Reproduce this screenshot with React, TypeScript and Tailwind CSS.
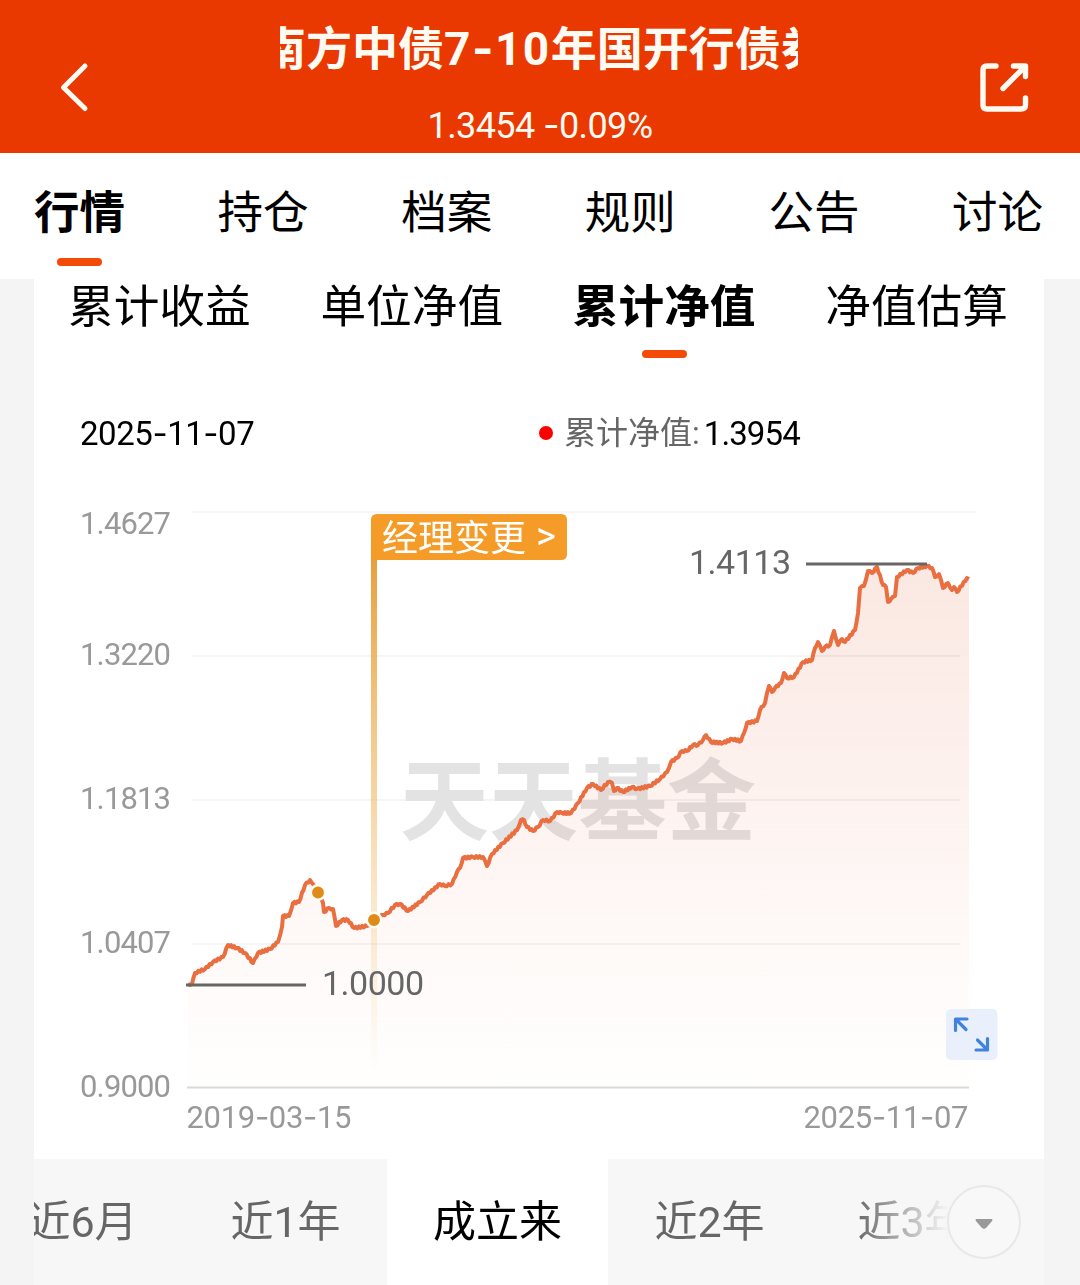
import React from 'react';
import clsx from 'clsx';

const mainTabs = ['行情', '持仓', '档案', '规则', '公告', '讨论'];
const chartTabs = ['累计收益', '单位净值', '累计净值', '净值估算'];
const ranges = ['近6月', '近1年', '成立来', '近2年', '近3年'];

const yLabels = [
  { value: '1.4627', y: 534 },
  { value: '1.3220', y: 665 },
  { value: '1.1813', y: 809 },
  { value: '1.0407', y: 953 },
  { value: '0.9000', y: 1097 },
];

const points: [number, number][] = [
  [188, 984], [192, 984], [195, 973], [205, 969], [213, 962], [223, 957], [228, 945], [237, 948], [245, 953], [253, 963],
  [258, 953], [270, 949], [278, 942], [282, 927], [283, 916], [289, 916], [293, 903], [299, 902], [305, 885], [310, 880],
  [312, 883], [318, 893], [323, 903], [324, 912], [329, 908], [333, 909], [336, 926], [342, 920], [348, 920], [354, 928],
  [367, 926], [374, 920], [383, 915], [388, 913], [395, 905], [400, 904], [408, 911], [420, 902], [427, 895], [440, 884],
  [445, 886], [452, 884], [457, 872], [460, 868], [463, 858], [473, 857], [483, 857], [487, 866], [492, 854], [503, 843],
  [517, 830], [521, 820], [524, 820], [527, 827], [533, 831], [538, 827], [543, 820], [550, 821], [557, 812], [562, 813],
  [571, 813], [578, 803], [587, 788], [593, 784], [601, 790], [608, 782], [612, 783], [614, 791], [617, 788], [623, 792],
  [632, 787], [637, 789], [650, 786], [660, 779], [667, 772], [671, 762], [677, 758], [682, 751], [687, 751], [693, 745],
  [698, 745], [703, 740], [706, 735], [711, 742], [723, 743], [732, 739], [741, 741], [744, 733], [747, 723], [757, 721],
  [760, 710], [765, 703], [767, 693], [769, 686], [772, 692], [775, 688], [781, 683], [784, 673], [787, 678], [794, 677],
  [803, 662], [812, 660], [815, 648], [818, 642], [822, 651], [825, 647], [830, 645], [834, 631], [838, 645], [842, 639],
  [845, 642], [855, 630], [858, 613], [860, 588], [864, 586], [868, 571], [872, 573], [877, 567], [883, 585], [886, 587],
  [888, 602], [891, 599], [895, 596], [897, 577], [907, 570], [913, 573], [918, 568], [927, 566], [932, 568], [935, 577],
  [939, 574], [943, 588], [948, 583], [952, 590], [954, 587], [957, 592], [967, 578], [969, 579],
];

// Small daily fluctuation between the sampled points
const buildLine = () => {
  const out: string[] = [];
  let n = 0;
  points.forEach(([x, y], i) => {
    out.push(`${x},${y}`);
    const next = points[i + 1];
    if (!next) return;
    const steps = Math.floor((next[0] - x) / 1.5);
    for (let s = 1; s < steps; s++) {
      const t = s / steps;
      n += 1;
      const offset = (n % 2 ? 1 : -1) * 0.9;
      out.push(`${(x + (next[0] - x) * t).toFixed(1)},${(y + (next[1] - y) * t + offset).toFixed(1)}`);
    }
  });
  return out.join(' L');
};

const line = buildLine();

// The dash is wider than the one of the digit font
const DateText: React.FC<{ value: string }> = ({ value }) => {
  const parts = value.split('-');
  return (
    <>
      {parts.map((part, i) => (
        <React.Fragment key={i}>
          {i > 0 && <span className="font-[Inter]">-</span>}
          {part}
        </React.Fragment>
      ))}
    </>
  );
};

const SvgDate: React.FC<{ value: string; x: number; y: number }> = ({ value, x, y }) => (
  <text x={x} y={y} textLength={165} className="fill-[#999999] text-[31px]">
    {value.split('-').map((part, i) => (
      <React.Fragment key={i}>
        {i > 0 && <tspan className="font-[Inter]">-</tspan>}
        {part}
      </React.Fragment>
    ))}
  </text>
);

const Header = () => (
  <header className="flex h-[153px] shrink-0 items-start justify-between bg-[#e93800] text-[#fffaf2]">
    <svg width="100" height="153" fill="none" stroke="currentColor" strokeWidth="5" strokeLinecap="round" strokeLinejoin="round">
      <path d="M85 66 L63.5 87.5 L85 108.5" />
    </svg>
    <div className="flex w-[520px] flex-col items-center pt-[14px]">
      <div className="h-[68px] w-[520px] overflow-hidden pr-0.5 whitespace-nowrap">
        <h1 className="-ml-[20px] w-[538px] overflow-hidden text-[46px] leading-[68px] font-bold">
          南方中债<span className="tracking-[1.5px]"><DateText value="7-10" /></span>年国开行债券
        </h1>
      </div>
      <p className="mt-[19px] text-[36px] leading-[48px] tracking-[-0.6px] whitespace-nowrap">
        1.3454 <DateText value="-0.09%" />
      </p>
    </div>
    <svg width="100" height="153" viewBox="980 0 100 153" fill="none" stroke="currentColor" strokeWidth="5.4" strokeLinecap="round" strokeLinejoin="round" className="overflow-visible">
      <path d="M996 66 H987 Q983 66 983 70 V105 Q983 109 987 109 H1021 Q1025.500 109 1025.500 105 V98" />
      <path d="M1003 88.500 L1025 66.500 M1013.500 66 H1025.500 V76.500" />
    </svg>
  </header>
);

const NavChart = () => (
  <svg width="1010" height="679" viewBox="34 480 1010 679" className="block">
    <defs>
      <linearGradient id="area" gradientUnits="userSpaceOnUse" x1="0" y1="565" x2="0" y2="1087">
        <stop offset="0" stopColor="#fae5de" stopOpacity="0.9" />
        <stop offset="0.45" stopColor="#fdf0ec" stopOpacity="0.85" />
        <stop offset="1" stopColor="#fffefd" stopOpacity="0.6" />
      </linearGradient>
      <linearGradient id="pole" gradientUnits="userSpaceOnUse" x1="0" y1="560" x2="0" y2="1075">
        <stop offset="0" stopColor="#e8a03c" />
        <stop offset="1" stopColor="#f7c67a" stopOpacity="0" />
      </linearGradient>
    </defs>

    {[512, 656, 800, 944].map((y) => (
      <line key={y} x1="192" x2={y === 512 ? 976 : 960} y1={y} y2={y} stroke="#f5f5f5" strokeWidth="2" />
    ))}

    <text x="400" y="833" textLength="356" className="fill-[#e3e3e3] text-[89px] font-bold">天天基金</text>

    <path d={`M${line} L969,1087 L188,1087 Z`} fill="url(#area)" className="mix-blend-multiply" />
    <line x1="187" x2="969" y1="1087.500" y2="1087.500" stroke="#d9d9d9" strokeWidth="2" />

    {yLabels.map((label) => (
      <text key={label.value} x="80" y={label.y} textLength="91" className="fill-[#999999] text-[31px]">{label.value}</text>
    ))}
    <SvgDate value="2019-03-15" x={186.5} y={1128} />
    <SvgDate value="2025-11-07" x={803.5} y={1128} />

    <rect x="371" y="556" width="6" height="519" fill="url(#pole)" />
    <path d={`M${line}`} fill="none" stroke="#e96e40" strokeWidth="4" strokeLinejoin="round" />

    <line x1="186" x2="306" y1="985" y2="985" stroke="#666666" strokeWidth="3" />
    <text x="322" y="995" textLength="102" className="fill-[#666666] text-[34px]">1.0000</text>
    <line x1="806" x2="927" y1="564" y2="564" stroke="#666666" strokeWidth="3" />
    <text x="689" y="574" textLength="102" className="fill-[#666666] text-[34px]">1.4113</text>

    {/* Manager change flag */}
    <path d="M371 560 V520 Q371 514 377 514 H561 Q567 514 567 520 V554 Q567 560 561 560 Z" fill="#f59b27" />
    <text x="382" y="551" className="fill-white text-[36px]">经理变更</text>
    <text x="536" y="549" className="fill-white text-[38px]">&gt;</text>
    {[[318, 892.5], [374, 920]].map(([x, y]) => (
      <circle key={x} cx={x} cy={y} r="7.2" fill="#df8b18" stroke="#fffdf5" strokeWidth="2.500" />
    ))}

    <rect x="946" y="1009" width="51.500" height="51" rx="5" fill="#e9f0fc" />
    <g fill="none" stroke="#4183dc" strokeWidth="3.2" strokeLinecap="round" strokeLinejoin="round">
      <path d="M967 1019 H955.500 V1030.500 M956 1019.500 L966 1029.500" />
      <path d="M976 1050 H987.500 V1038.500 M987 1049.500 L977.500 1040" />
    </g>
  </svg>
);

export default function App() {
  return (
    <div className="flex h-[1285px] w-[1080px] flex-col overflow-hidden bg-[#f4f4f4] font-[Roboto,'Noto_Sans_CJK_SC',sans-serif] text-black">
      <Header />

      <nav className="flex h-[126px] shrink-0 justify-between bg-white pt-[27px] pr-[37px] pl-[34px]">
        {mainTabs.map((tab, i) => (
          <div key={tab} className="flex flex-col items-center">
            <span className={clsx('text-[45.5px] leading-[68px]', i === 0 && 'font-bold')}>{tab}</span>
            {i === 0 && <span className="mt-[10px] h-2 w-[45px] rounded-full bg-[#f44a08]" />}
          </div>
        ))}
      </nav>

      <main className="mx-auto flex w-[1010px] flex-1 -translate-x-px flex-col bg-white">
        <div className="flex h-[113px] justify-between pr-[36px] pl-[34px]">
          {chartTabs.map((tab, i) => (
            <div key={tab} className="flex flex-col items-center">
              <span className={clsx('text-[45.7px] leading-[58px]', i === 2 && 'font-bold')}>{tab}</span>
              {i === 2 && <span className="mt-[13px] h-2 w-[45px] rounded-full bg-[#f44a08]" />}
            </div>
          ))}
        </div>

        <div className="flex h-[88px] items-start pl-[46px] text-[33px] leading-[83px]">
          <span className="w-[459px] tracking-[-0.45px]"><DateText value="2025-11-07" /></span>
          <span className="mt-[34px] mr-3 size-[14px] rounded-full bg-[#fb0000]" />
          <span className="-ml-px text-[32px] text-[#666666]">累计净值:</span>
          <span className="ml-1 tracking-[-0.9px]">1.3954</span>
        </div>

        <NavChart />

        <div className="relative flex h-[126px] overflow-hidden bg-[#f7f7f7]">
          <div className="-ml-[53px] flex shrink-0">
            {ranges.map((range) => (
              <button
                key={range}
                className={clsx(
                  'h-full text-[43px]',
                  range === '成立来' ? 'w-[221px] bg-white text-black' : 'w-[203px] text-[#666666]',
                )}
              >
                {range}
              </button>
            ))}
          </div>
          <div className="absolute inset-y-0 right-0 w-[190px] bg-linear-to-r from-[#f7f7f7]/0 to-[#f7f7f7] to-50%" />
          <div className="absolute top-[26px] right-[23px] flex size-[74px] items-center justify-center rounded-full border-2 border-[#e8e8e8] bg-[#f8f8f8]">
            <svg width="18" height="12" className="mt-1" fill="#999999" stroke="#999999" strokeWidth="2" strokeLinejoin="round">
              <path d="M1.5 2 H16.5 L10.500 9 Q9 10.500 7.500 9 Z" />
            </svg>
          </div>
        </div>
      </main>
    </div>
  );
}
